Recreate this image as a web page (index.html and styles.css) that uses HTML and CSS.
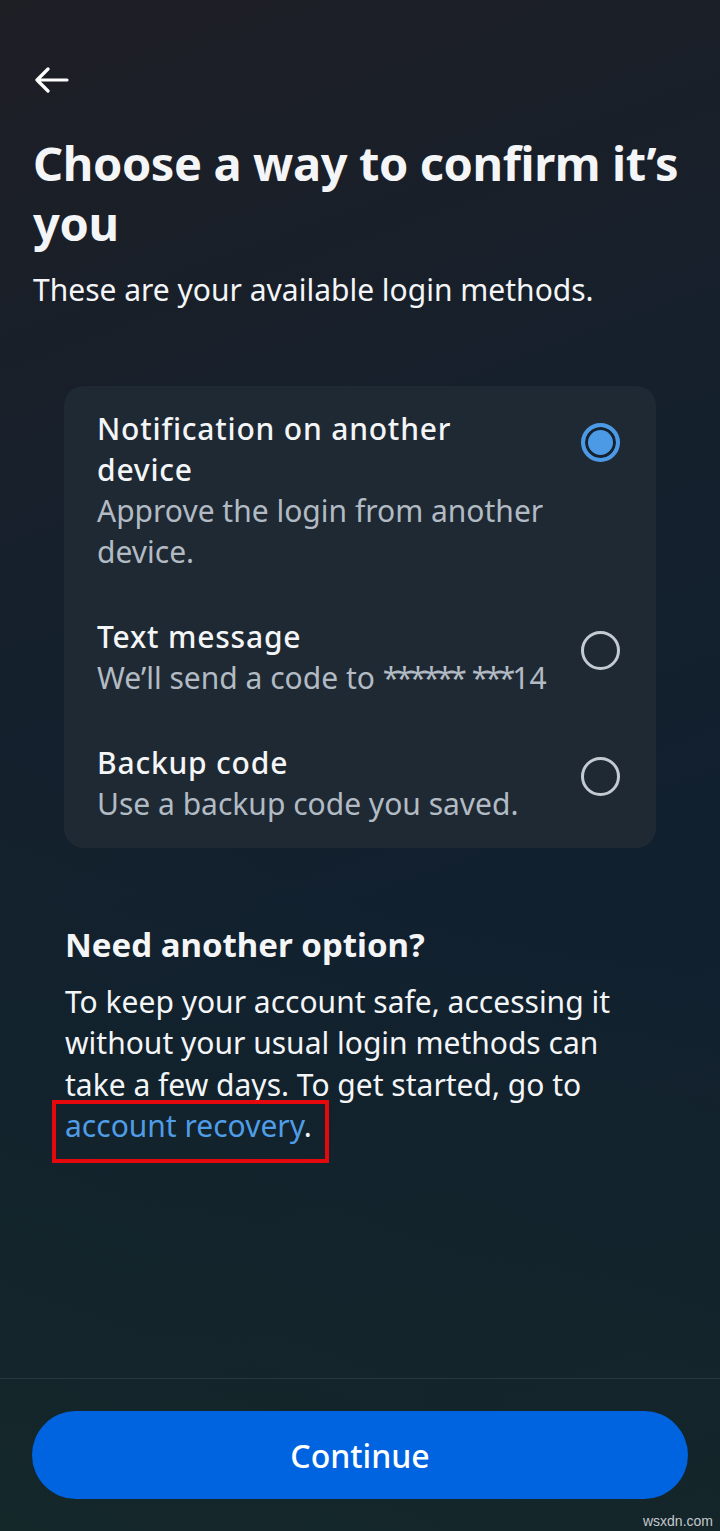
FILE: index.html
```html
<!DOCTYPE html>
<html lang="en">
<head>
<meta charset="utf-8">
<title>Choose a way to confirm it's you</title>
<link rel="stylesheet" href="styles.css">
</head>
<body>
<div class="screen">
  <main class="content">
    <header class="header">
      <button class="back" aria-label="Back">
        <svg width="34" height="26" viewBox="0 0 34 26" aria-hidden="true">
          <path d="M2 13 H32 M13 2 L2 13 L13 24" fill="none" stroke="#ffffff" stroke-width="3.2" stroke-linecap="round" stroke-linejoin="round"/>
        </svg>
      </button>
      <h1 class="title">Choose a way to confirm it’s you</h1>
      <p class="subtitle">These are your available login methods.</p>
    </header>

    <section class="card">
      <div class="option">
        <div class="option-text">
          <div class="option-title">Notification on another device</div>
          <div class="option-desc">Approve the login from another device.</div>
        </div>
        <span class="radio radio-on"></span>
      </div>
      <div class="option">
        <div class="option-text">
          <div class="option-title">Text message</div>
          <div class="option-desc nowrap">We’ll send a code to <span class="mask">******</span> <span class="mask">***</span>14</div>
        </div>
        <span class="radio"></span>
      </div>
      <div class="option">
        <div class="option-text">
          <div class="option-title">Backup code</div>
          <div class="option-desc">Use a backup code you saved.</div>
        </div>
        <span class="radio"></span>
      </div>
    </section>

    <section class="more">
      <h2 class="more-title">Need another option?</h2>
      <p class="more-text">To keep your account safe, accessing it without your usual login methods can take a few days. To get started, go to <span class="highlight"><a class="link" href="#">account recovery</a>.</span></p>
    </section>
  </main>

  <footer class="footer">
    <button class="continue">Continue</button>
    <span class="watermark">wsxdn.com</span>
  </footer>
</div>
</body>
</html>
```

FILE: styles.css
```css
* { box-sizing: border-box; }

html, body {
  margin: 0;
  padding: 0;
}

body {
  width: 720px;
  height: 1531px;
  font-family: "Noto Sans", "Open Sans", sans-serif;
  color: #f4f5f7;
  background:
    linear-gradient(200deg, rgba(20, 38, 40, 0) 55%, rgba(22, 44, 38, 0.55) 100%),
    linear-gradient(160deg, #1e1e25 0%, #15202c 35%, #11202f 60%, #13222c 100%);
  overflow: hidden;
}

.screen {
  position: relative;
  height: 1531px;
  display: flex;
  flex-direction: column;
}

.content {
  flex: 1;
  display: flex;
  flex-direction: column;
}

.header {
  padding: 67px 33px 0 33px;
}

.back {
  display: block;
  width: 34px;
  height: 26px;
  padding: 0;
  margin: 0 0 0 2px;
  border: 0;
  background: none;
}

.back svg { display: block; }

.title {
  margin: 40px 0 0 0;
  font-size: 47px;
  line-height: 60px;
  font-weight: 700;
  letter-spacing: -0.4px;
}

.subtitle {
  margin: 17px 0 0 0;
  font-size: 30px;
  line-height: 40px;
  font-weight: 400;
}

.card {
  margin: 76px 64px 0 64px;
  padding: 0 0 2px 0;
  background: #1f2933;
  border-radius: 20px;
}

.option {
  display: flex;
  align-items: flex-start;
  padding: 22px 36px 22px 33px;
}

.option-text {
  flex: 1;
  min-width: 0;
  padding-right: 32px;
}

.option-title {
  font-size: 30px;
  line-height: 41px;
  font-weight: 500;
  letter-spacing: 0.8px;
  color: #f4f5f7;
}

.option-desc {
  font-size: 30px;
  line-height: 41px;
  color: #b2bbc4;
}

.nowrap {
  white-space: nowrap;
}

.mask {
  letter-spacing: -3px;
}

.radio {
  flex: none;
  width: 39px;
  height: 39px;
  margin-top: 15px;
  border-radius: 50%;
  border: 3px solid #c3cad2;
}

.radio-on {
  border: 4px solid #4c9ae6;
  background: #4c9ae6;
  box-shadow: inset 0 0 0 3px #16222e;
}

.more {
  padding: 75px 66px 0 65px;
}

.more-title {
  margin: 0;
  font-size: 33px;
  line-height: 44px;
  font-weight: 700;
}

.more-text {
  margin: 14px 0 0 0;
  font-size: 30px;
  line-height: 41.3px;
  font-weight: 400;
}

.highlight {
  position: relative;
}

.highlight::after {
  content: "";
  position: absolute;
  left: -13px;
  right: -17px;
  top: -5px;
  bottom: -17px;
  border: 4px solid #e5080c;
  pointer-events: none;
}

.link {
  color: #4f9de6;
  text-decoration: none;
}

.footer {
  position: relative;
  border-top: 1px solid #2b3540;
  padding: 32px;
}

.continue {
  display: block;
  width: 100%;
  height: 88px;
  border: 0;
  border-radius: 44px;
  background: #0064e0;
  color: #ffffff;
  font-family: "Noto Sans", "Open Sans", sans-serif;
  font-size: 32px;
  font-weight: 500;
}

.watermark {
  position: absolute;
  right: 7px;
  bottom: 2px;
  font-family: "Liberation Sans", Arial, sans-serif;
  font-size: 14px;
  color: #c4c8cc;
}
```
